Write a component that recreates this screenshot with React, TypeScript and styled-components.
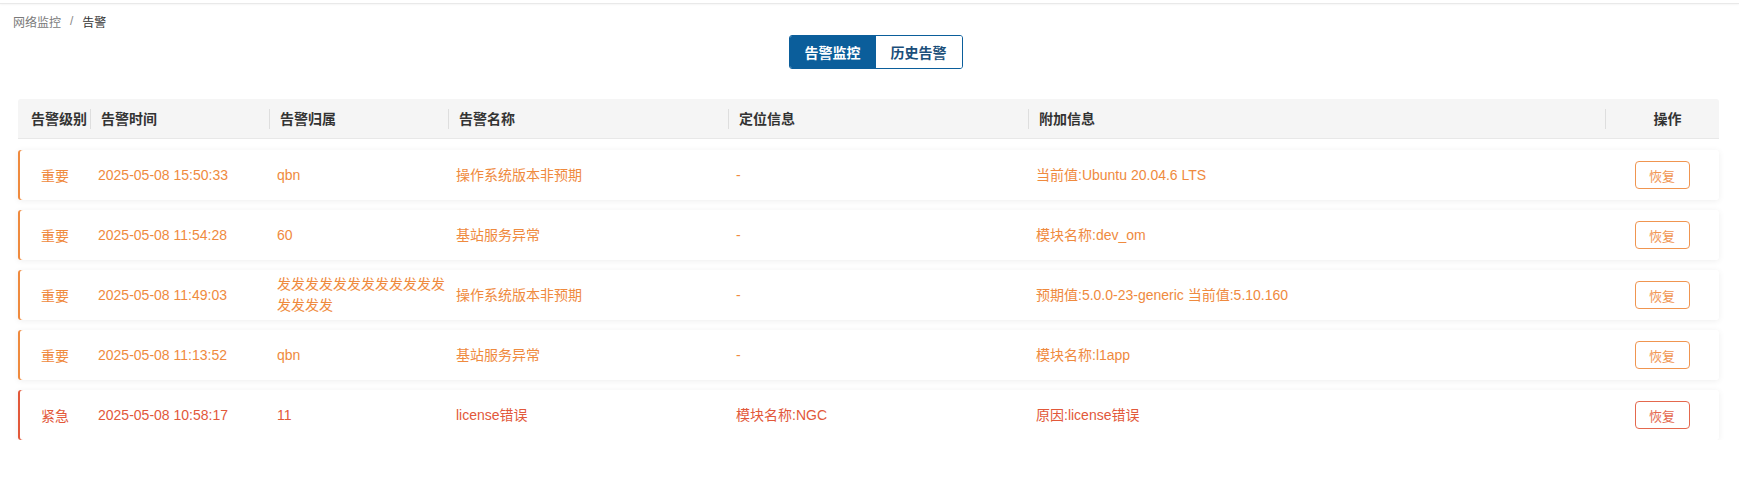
import React, { useState } from 'react';
import styled, { createGlobalStyle } from 'styled-components';

const GlobalStyle = createGlobalStyle`
  body {
    margin: 0;
    background: #ffffff;
    font-family: "Liberation Sans", "Noto Sans CJK SC", sans-serif;
    color: #333;
  }
`;

type Level = 'major' | 'critical';

interface Alarm {
  level: Level;
  time: string;
  owner: string;
  name: string;
  location: string;
  extra: string;
}

const alarms: Alarm[] = [
  {
    level: 'major',
    time: '2025-05-08 15:50:33',
    owner: 'qbn',
    name: '操作系统版本非预期',
    location: '-',
    extra: '当前值:Ubuntu 20.04.6 LTS',
  },
  {
    level: 'major',
    time: '2025-05-08 11:54:28',
    owner: '60',
    name: '基站服务异常',
    location: '-',
    extra: '模块名称:dev_om',
  },
  {
    level: 'major',
    time: '2025-05-08 11:49:03',
    owner: '发发发发发发发发发发发发发发发发',
    name: '操作系统版本非预期',
    location: '-',
    extra: '预期值:5.0.0-23-generic 当前值:5.10.160',
  },
  {
    level: 'major',
    time: '2025-05-08 11:13:52',
    owner: 'qbn',
    name: '基站服务异常',
    location: '-',
    extra: '模块名称:l1app',
  },
  {
    level: 'critical',
    time: '2025-05-08 10:58:17',
    owner: '11',
    name: 'license错误',
    location: '模块名称:NGC',
    extra: '原因:license错误',
  },
];

const levelColor: Record<Level, string> = {
  major: '#ef8a3e',
  critical: '#e2583a',
};

const levelText: Record<Level, string> = {
  major: '重要',
  critical: '紧急',
};

const columns = '72px 179px 179px 280px 300px 1fr 114px';

export default function App() {
  const [tab, setTab] = useState<'live' | 'history'>('live');

  return (
    <>
      <GlobalStyle />
      <TopBar />
      <Page>
        <Breadcrumb>
          <Crumb>网络监控</Crumb>
          <Sep>/</Sep>
          <Crumb $current>告警</Crumb>
        </Breadcrumb>

        <TabWrap>
          <TabGroup>
            <TabBtn $active={tab === 'live'} onClick={() => setTab('live')}>
              告警监控
            </TabBtn>
            <TabBtn
              $active={tab === 'history'}
              onClick={() => setTab('history')}
            >
              历史告警
            </TabBtn>
          </TabGroup>
        </TabWrap>

        <Table>
          <HeadRow>
            <HeadCell $first>告警级别</HeadCell>
            <HeadCell>告警时间</HeadCell>
            <HeadCell>告警归属</HeadCell>
            <HeadCell>告警名称</HeadCell>
            <HeadCell>定位信息</HeadCell>
            <HeadCell>附加信息</HeadCell>
            <HeadCell $center>操作</HeadCell>
          </HeadRow>

          <Body>
            {alarms.map((a, i) => (
              <Row key={i} $color={levelColor[a.level]}>
                <LevelCell>{levelText[a.level]}</LevelCell>
                <Cell>{a.time}</Cell>
                <Cell $tight>{a.owner}</Cell>
                <Cell>{a.name}</Cell>
                <Cell>{a.location}</Cell>
                <Cell>{a.extra}</Cell>
                <ActionCell>
                  <RestoreBtn type="button" $color={levelColor[a.level]}>
                    恢复
                  </RestoreBtn>
                </ActionCell>
              </Row>
            ))}
          </Body>
        </Table>
      </Page>
    </>
  );
}

const TopBar = styled.div`
  height: 3px;
  border-bottom: 1px solid #e9e9e9;
  box-shadow: 0 1px 2px rgba(0, 0, 0, 0.04);
`;

const Page = styled.div`
  padding: 7px 20px 0 18px;
`;

const Breadcrumb = styled.div`
  display: flex;
  align-items: center;
  height: 20px;
  font-size: 12px;
  margin-left: -5px;
`;

const Crumb = styled.span<{ $current?: boolean }>`
  color: ${(p) => (p.$current ? '#333' : '#7a7a7a')};
`;

const Sep = styled.span`
  color: #888;
  margin: 0 9px;
`;

const TabWrap = styled.div`
  display: flex;
  justify-content: center;
  padding-left: 14px;
  margin-top: 4px;
`;

const TabGroup = styled.div`
  display: flex;
  border: 1px solid #0b5e9b;
  border-radius: 3px;
  overflow: hidden;
`;

const TabBtn = styled.button<{ $active: boolean }>`
  height: 32px;
  width: 86px;
  border: none;
  outline: none;
  cursor: pointer;
  font-family: inherit;
  font-size: 14px;
  font-weight: 700;
  background: ${(p) => (p.$active ? '#0b5e9b' : '#ffffff')};
  color: ${(p) => (p.$active ? '#ffffff' : '#1b4f7a')};
`;

const Table = styled.div`
  margin-top: 30px;
`;

const HeadRow = styled.div`
  display: grid;
  grid-template-columns: ${columns};
  align-items: center;
  height: 40px;
  background: #f5f5f5;
  border-bottom: 1px solid #e8e8e8;
  border-radius: 3px 3px 0 0;
  box-sizing: border-box;
`;

const HeadCell = styled.div<{ $first?: boolean; $center?: boolean }>`
  font-size: 14px;
  font-weight: 700;
  color: #333;
  line-height: 20px;
  padding-left: ${(p) => (p.$first ? '13px' : '10px')};
  border-left: ${(p) => (p.$first ? 'none' : '1px solid #dedede')};
  text-align: ${(p) => (p.$center ? 'center' : 'left')};
  white-space: nowrap;
`;

const Body = styled.div`
  display: flex;
  flex-direction: column;
  gap: 10px;
  margin-top: 11px;
`;

const Row = styled.div<{ $color: string }>`
  display: grid;
  grid-template-columns: ${columns};
  align-items: center;
  height: 50px;
  background: #ffffff;
  border-radius: 3px;
  box-shadow: inset 2px 0 0 ${(p) => p.$color},
    0 1px 6px rgba(0, 0, 0, 0.07);
  color: ${(p) => p.$color};
  font-size: 14px;
`;

const LevelCell = styled.div`
  text-align: center;
  padding-left: 2px;
`;

const Cell = styled.div<{ $tight?: boolean }>`
  padding: ${(p) => (p.$tight ? '0 2px 0 8px' : '0 8px')};
  line-height: 21px;
  word-break: break-all;
`;

const ActionCell = styled.div`
  display: flex;
  justify-content: center;
`;

const RestoreBtn = styled.button<{ $color: string }>`
  width: 55px;
  height: 28px;
  border: 1px solid ${(p) => p.$color};
  border-radius: 4px;
  background: #ffffff;
  color: ${(p) => p.$color};
  opacity: 0.9;
  font-family: inherit;
  font-size: 13px;
  cursor: pointer;
`;
